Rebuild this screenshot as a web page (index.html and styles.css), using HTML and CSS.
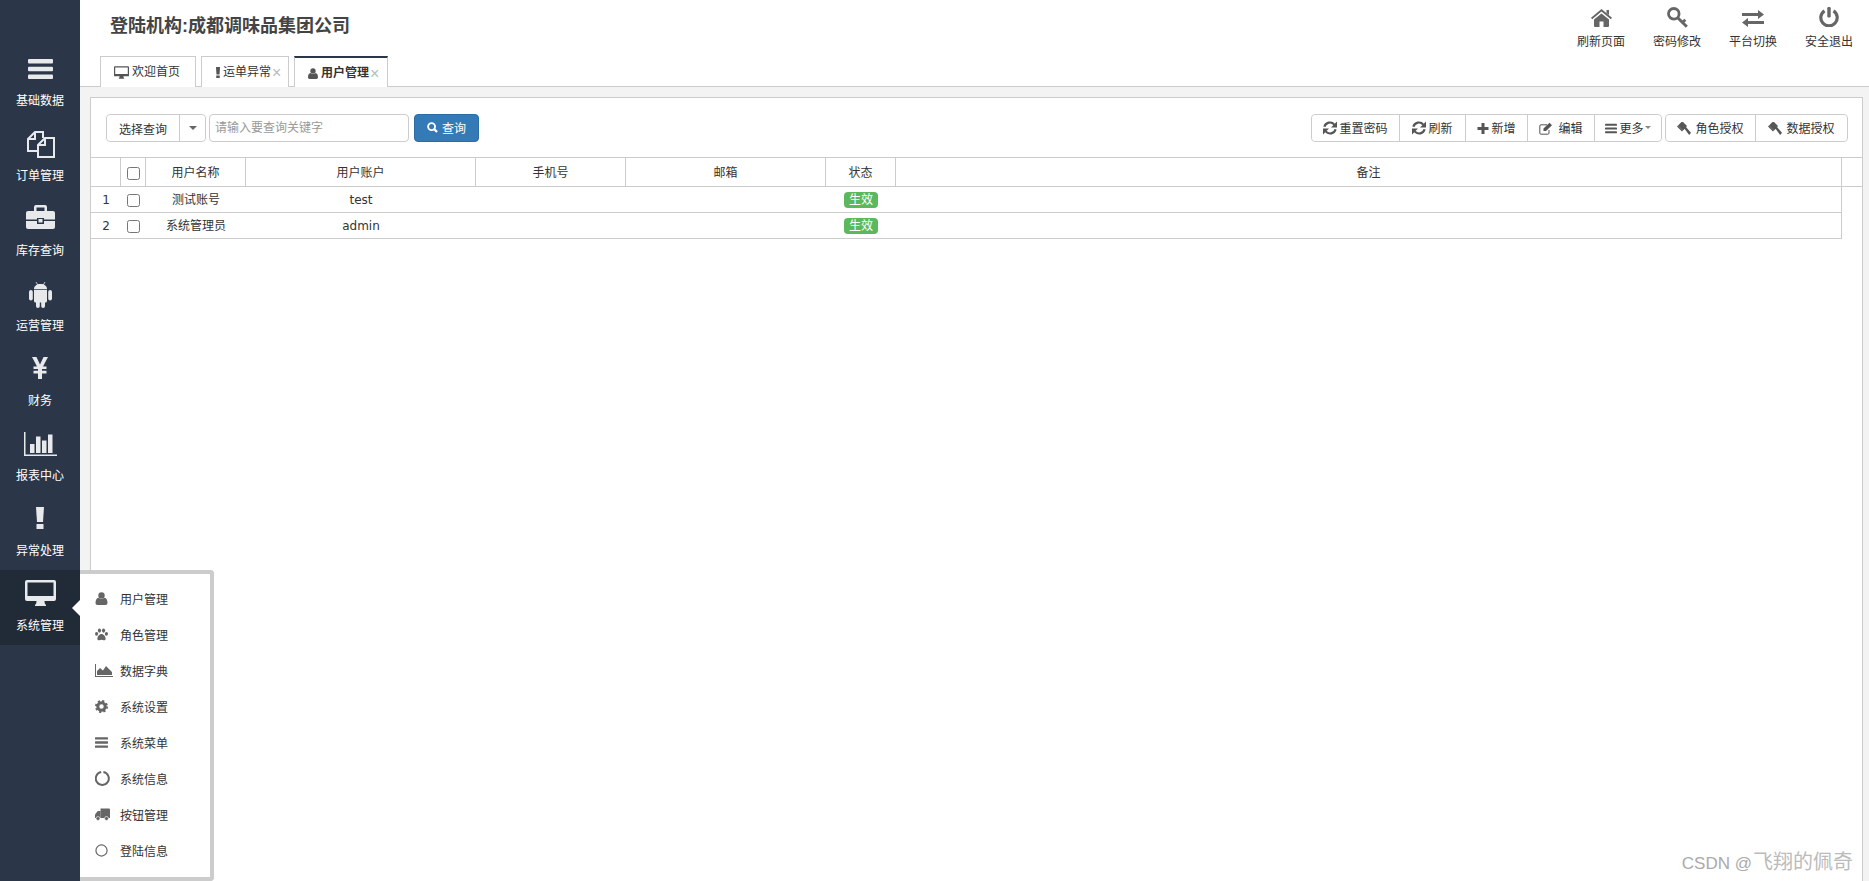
FILE: index.html
```html
<!DOCTYPE html>
<html lang="zh">
<head>
<meta charset="utf-8">
<title>用户管理</title>
<link rel="stylesheet" href="styles.css">
</head>
<body>
<svg class="sprite" xmlns="http://www.w3.org/2000/svg">
  <symbol id="bars" viewBox="0 0 25 20"><rect width="25" height="4.4" rx="1"/><rect y="7.8" width="25" height="4.4" rx="1"/><rect y="15.6" width="25" height="4.4" rx="1"/></symbol>
  <symbol id="files" viewBox="0 0 29 28"><path fill="none" stroke="currentColor" stroke-width="2" d="M11 21H2V9l7-7h8v6"/><path fill="none" stroke="currentColor" stroke-width="2" d="M9 2v7H2"/><path fill="none" stroke="currentColor" stroke-width="2" d="M12 27V15l7-7h9v19z"/><path fill="none" stroke="currentColor" stroke-width="2" d="M19 8v7h-7"/></symbol>
  <symbol id="briefcase" viewBox="0 0 29 24"><path fill-rule="evenodd" d="M10 0h9a2 2 0 0 1 2 2v4h6a2 2 0 0 1 2 2v6.5H18V13h-7v1.500H0V8a2 2 0 0 1 2-2h6V2a2 2 0 0 1 2-2zm.5 2.500V6h8V2.500z"/><path d="M0 16h11v3h7v-3h11v6a2 2 0 0 1-2 2H2a2 2 0 0 1-2-2z"/><rect x="12.500" y="14" width="4" height="3.500"/></symbol>
  <symbol id="android" viewBox="0 0 23 26"><path d="M5 7.200C5 4 7.500 2 11.500 2S18 4 18 7.200z"/><path d="M7 0l1.800 3M16 0l-1.800 3" stroke="currentColor" stroke-width=".8"/><path d="M5 8h13v11a1.500 1.500 0 0 1-1.500 1.500h-10A1.500 1.500 0 0 1 5 19z"/><rect y="8" width="3.800" height="10.500" rx="1.900"/><rect x="19.200" y="8" width="3.800" height="10.500" rx="1.900"/><rect x="7" y="18" width="3.800" height="8" rx="1.900"/><rect x="12.200" y="18" width="3.800" height="8" rx="1.900"/></symbol>
  <symbol id="yen" viewBox="0 0 16 22"><path d="M0 0h4.500L8 7.500 11.500 0H16l-5 9.500h3.500V12H10v1.800h4.500v2.600H10V22H6v-5.600H1.500v-2.600H6V12H1.500V9.500H5z"/></symbol>
  <symbol id="chart" viewBox="0 0 33 24"><rect width="1.500" height="24"/><rect y="22.500" width="33" height="1.500"/><rect x="6" y="12" width="4.500" height="9"/><rect x="12" y="4.500" width="4.500" height="16.500"/><rect x="18" y="8.500" width="4.500" height="12.500"/><rect x="24" y="2.500" width="4.500" height="18.500"/></symbol>
  <symbol id="excl" viewBox="0 0 8 22"><path d="M0 0h8l-1 15H1z"/><rect x=".5" y="17" width="7" height="5"/></symbol>
  <symbol id="desktop" viewBox="0 0 31 26"><path fill-rule="evenodd" d="M2 0h27a2 2 0 0 1 2 2v17a2 2 0 0 1-2 2H19.500c0 2 .5 3 1.500 4v1H10v-1c1-1 1.500-2 1.500-4H2a2 2 0 0 1-2-2V2a2 2 0 0 1 2-2zm.5 2.500V16h26V2.500z"/></symbol>
  <symbol id="home" viewBox="0 0 21 18"><path d="M10.500 0L21 8.800l-1.200 1.400-9.300-7.700-9.300 7.700L0 8.800z"/><path d="M15.500 1H18v5l-2.500-2z"/><path d="M10.500 4.500L18 10.600V17a1 1 0 0 1-1 1h-4.500v-5.500h-4V18H4a1 1 0 0 1-1-1v-6.400z"/></symbol>
  <symbol id="key" viewBox="0 0 21 21"><circle cx="6.800" cy="6.800" r="5.300" fill="none" stroke="currentColor" stroke-width="2.800"/><path d="M10.500 10.500L19.800 19.800" fill="none" stroke="currentColor" stroke-width="3"/><path d="M14.500 14.500l2.800-2.800 2 2-2.800 2.800z"/></symbol>
  <symbol id="exchange" viewBox="0 0 22 17"><path d="M0 3h16V0l6 4.500L16 9V6H0zM22 11H6V8L0 12.500 6 17v-3h16z"/></symbol>
  <symbol id="power" viewBox="0 0 20 20"><path d="M5.500 3.800a8.200 8.200 0 1 0 9 0" fill="none" stroke="currentColor" stroke-width="3.200"/><rect x="8.300" width="3.400" height="10.500" rx="1.200"/></symbol>
  <symbol id="user" viewBox="0 0 12 13"><circle cx="6" cy="3.400" r="3.200"/><path d="M0 11c0-3 1-4.800 3-5.200 1.800 1.400 4.200 1.400 6 0 2 .4 3 2.200 3 5.200 0 1.300-.8 2-2 2H2c-1.200 0-2-.7-2-2z"/></symbol>
  <symbol id="paw" viewBox="0 0 14 13"><ellipse cx="1.700" cy="5.800" rx="1.700" ry="2"/><ellipse cx="4.800" cy="2.300" rx="1.700" ry="2.300"/><ellipse cx="9.200" cy="2.300" rx="1.700" ry="2.300"/><ellipse cx="12.300" cy="5.800" rx="1.700" ry="2"/><path d="M7 6c2.300 0 4.500 3 4.500 5 0 2-2.500 1.800-4.500 1.200-2 .6-4.500.8-4.500-1.200 0-2 2.200-5 4.500-5z"/></symbol>
  <symbol id="area" viewBox="0 0 18 13"><rect width="1" height="13"/><rect y="12" width="18" height="1"/><path d="M2 11V7l3-3 3 2.500L11 2l6 6v3z"/></symbol>
  <symbol id="cog" viewBox="0 0 14 14"><circle cx="7" cy="7" r="4" fill="none" stroke="currentColor" stroke-width="3.200"/><circle cx="7" cy="7" r="6" fill="none" stroke="currentColor" stroke-width="2" stroke-dasharray="2.360 2.350"/></symbol>
  <symbol id="notch" viewBox="0 0 15 15"><path d="M8.400 1.100A6.500 6.500 0 1 1 6.200 1.100" fill="none" stroke="currentColor" stroke-width="2"/></symbol>
  <symbol id="truck" viewBox="0 0 15 12"><path d="M5.500 0H14a1 1 0 0 1 1 1v8.500H5.500z"/><path d="M5.500 2.500H2.800L0 6v3.500h5.500z"/><circle cx="3" cy="10" r="2" stroke="#fff" stroke-width=".6"/><circle cx="11.500" cy="10" r="2" stroke="#fff" stroke-width=".6"/></symbol>
  <symbol id="circle" viewBox="0 0 14 14"><circle cx="7" cy="7" r="6" fill="none" stroke="currentColor" stroke-width="1.300"/></symbol>
  <symbol id="refresh" viewBox="0 0 14 14"><path d="M11.300 3.600A5.700 5.700 0 0 0 1.400 5.800" fill="none" stroke="currentColor" stroke-width="2.200"/><path d="M14 0.500v6H8z"/><path d="M2.700 10.400A5.700 5.700 0 0 0 12.600 8.200" fill="none" stroke="currentColor" stroke-width="2.200"/><path d="M0 13.500v-6h6z"/></symbol>
  <symbol id="plus" viewBox="0 0 11 11"><path d="M4 0h3v4h4v3H7v4H4V7H0V4h4z"/></symbol>
  <symbol id="edit" viewBox="0 0 14 13"><path d="M10 8v3a1.200 1.200 0 0 1-1.200 1.200H2A1.200 1.200 0 0 1 .8 11V4A1.200 1.200 0 0 1 2 2.800h6" fill="none" stroke="currentColor" stroke-width="1"/><path d="M4.500 6.500L10.500.8 13 3.200 7 9H4.500z"/></symbol>
  <symbol id="gavel" viewBox="0 0 14 13"><path d="M4.500 0l5 5-3.500 3.500-5-5z"/><path d="M0 4.500l1-1 5 5-1 1zM4 0l5 5 1-1-5-5z"/><path d="M7 6l1.500-1.500L14 10.800 12.200 13z"/></symbol>
  <symbol id="search" viewBox="0 0 12 12"><circle cx="5" cy="5" r="3.800" fill="none" stroke="currentColor" stroke-width="2"/><path d="M7.800 7.800L11 11" fill="none" stroke="currentColor" stroke-width="2.400"/></symbol>
</svg>

<div class="app">
  <nav class="side">
    <a class="side-item"><svg class="ic ic-bars"><use href="#bars"/></svg><span>基础数据</span></a>
    <a class="side-item"><svg class="ic ic-files"><use href="#files"/></svg><span>订单管理</span></a>
    <a class="side-item"><svg class="ic ic-brief"><use href="#briefcase"/></svg><span>库存查询</span></a>
    <a class="side-item"><svg class="ic ic-android"><use href="#android"/></svg><span>运营管理</span></a>
    <a class="side-item"><svg class="ic ic-yen"><use href="#yen"/></svg><span>财务</span></a>
    <a class="side-item"><svg class="ic ic-chart"><use href="#chart"/></svg><span>报表中心</span></a>
    <a class="side-item"><svg class="ic ic-excl"><use href="#excl"/></svg><span>异常处理</span></a>
    <a class="side-item is-active"><svg class="ic ic-desktop"><use href="#desktop"/></svg><span>系统管理</span></a>
  </nav>

  <main class="main">
    <header class="head">
      <div class="head-top">
        <h1 class="org">登陆机构:成都调味品集团公司</h1>
        <div class="actions">
          <a class="action"><svg class="ic a-home"><use href="#home"/></svg><span>刷新页面</span></a>
          <a class="action"><svg class="ic a-key"><use href="#key"/></svg><span>密码修改</span></a>
          <a class="action"><svg class="ic a-ex"><use href="#exchange"/></svg><span>平台切换</span></a>
          <a class="action"><svg class="ic a-pow"><use href="#power"/></svg><span>安全退出</span></a>
        </div>
      </div>
      <div class="tabs">
        <a class="tab t-home"><svg class="ic t-desktop"><use href="#desktop"/></svg>欢迎首页</a>
        <a class="tab t-err"><svg class="ic t-excl"><use href="#excl"/></svg>运单异常<i class="close">×</i></a>
        <a class="tab t-user is-current"><svg class="ic t-person"><use href="#user"/></svg>用户管理<i class="close">×</i></a>
      </div>
    </header>

    <section class="content">
      <div class="panel">
        <div class="toolbar">
          <div class="query">
            <div class="split">
              <button class="sbtn s-label">选择查询</button>
              <button class="sbtn s-caret"><i class="caret"></i></button>
            </div>
            <input class="kw" type="text" placeholder="请输入要查询关键字">
            <button class="go"><svg class="ic b-search"><use href="#search"/></svg>查询</button>
          </div>
          <div class="tools">
            <div class="group">
              <button class="tbtn w88"><svg class="ic b-ic"><use href="#refresh"/></svg>重置密码</button>
              <button class="tbtn w66"><svg class="ic b-ic"><use href="#refresh"/></svg>刷新</button>
              <button class="tbtn w62"><svg class="ic b-plus"><use href="#plus"/></svg>新增</button>
              <button class="tbtn w67"><svg class="ic b-edit"><use href="#edit"/></svg>编辑</button>
              <button class="tbtn w68"><svg class="ic b-plus"><use href="#bars"/></svg>更多<i class="caret caret-sm"></i></button>
            </div>
            <div class="group">
              <button class="tbtn w91"><svg class="ic b-gavel"><use href="#gavel"/></svg>角色授权</button>
              <button class="tbtn w92"><svg class="ic b-gavel"><use href="#gavel"/></svg>数据授权</button>
            </div>
          </div>
        </div>

        <div class="grid-head">
          <div class="row row-head">
            <div class="cell"></div>
            <div class="cell"><input class="chk" type="checkbox"></div>
            <div class="cell">用户名称</div>
            <div class="cell">用户账户</div>
            <div class="cell">手机号</div>
            <div class="cell">邮箱</div>
            <div class="cell">状态</div>
            <div class="cell">备注</div>
          </div>
        </div>
        <div class="row row-body">
          <div class="cell">1</div>
          <div class="cell"><input class="chk" type="checkbox"></div>
          <div class="cell">测试账号</div>
          <div class="cell">test</div>
          <div class="cell"></div>
          <div class="cell"></div>
          <div class="cell"><span class="badge">生效</span></div>
          <div class="cell"></div>
        </div>
        <div class="row row-body">
          <div class="cell">2</div>
          <div class="cell"><input class="chk" type="checkbox"></div>
          <div class="cell">系统管理员</div>
          <div class="cell">admin</div>
          <div class="cell"></div>
          <div class="cell"></div>
          <div class="cell"><span class="badge">生效</span></div>
          <div class="cell"></div>
        </div>
      </div>
    </section>
  </main>

  <div class="popup">
    <a class="pop-item"><svg class="ic p-ic"><use href="#user"/></svg>用户管理</a>
    <a class="pop-item"><svg class="ic p-ic"><use href="#paw"/></svg>角色管理</a>
    <a class="pop-item"><svg class="ic p-area"><use href="#area"/></svg>数据字典</a>
    <a class="pop-item"><svg class="ic p-ic"><use href="#cog"/></svg>系统设置</a>
    <a class="pop-item"><svg class="ic p-ic"><use href="#bars"/></svg>系统菜单</a>
    <a class="pop-item"><svg class="ic p-truck"><use href="#notch"/></svg>系统信息</a>
    <a class="pop-item"><svg class="ic p-truck"><use href="#truck"/></svg>按钮管理</a>
    <a class="pop-item"><svg class="ic p-ic"><use href="#circle"/></svg>登陆信息</a>
  </div>

  <div class="mark">CSDN @<span class="mark-cjk">飞翔的佩奇</span></div>
</div>
</body>
</html>
```

FILE: styles.css
```css
* { box-sizing: border-box; }
html, body { height: 100%; }
body {
  margin: 0;
  overflow: hidden;
  font-family: "DejaVu Sans", "Noto Sans CJK SC", sans-serif;
  font-size: 12px;
  color: #333;
  background: #fff;
}
.sprite { display: none; }
.ic { display: block; fill: currentColor; flex: none; }

.app { position: relative; display: flex; height: 881px; }

/* sidebar */
.side {
  width: 80px;
  flex: none;
  padding-top: 45px;
  background: #2b3648;
  color: #e8e9eb;
}
.side-item {
  height: 75px;
  display: flex;
  flex-direction: column;
  align-items: center;
  position: relative;
  padding-top: 46px;
}
.side-item .ic { position: absolute; }
.side-item span { line-height: 20px; color: #fff; }
.side-item.is-active { background: #212b38; }
.ic-bars { width: 25px; height: 20px; top: 14px; }
.ic-files { width: 29px; height: 28px; top: 10px; }
.ic-brief { width: 29px; height: 24px; top: 10px; }
.ic-android { width: 23px; height: 26px; top: 12px; }
.ic-yen { width: 16px; height: 22px; top: 12px; }
.ic-chart { width: 33px; height: 24px; top: 12px; }
.ic-excl { width: 8px; height: 22px; top: 12px; }
.ic-desktop { width: 31px; height: 26px; top: 10px; }

/* main */
.main { flex: 1; min-width: 0; display: flex; flex-direction: column; }
.head { background: #fff; border-bottom: 1px solid #ccc; height: 87px; }
.head-top { height: 56px; display: flex; justify-content: space-between; padding-left: 30px; padding-right: 2px; }
.org {
  margin: 0;
  padding-top: 14px;
  font-family: "Liberation Sans", "Noto Sans CJK SC", sans-serif;
  font-size: 18px;
  line-height: 24px;
  font-weight: bold;
  color: #444;
}
.actions { display: flex; }
.action {
  width: 76px;
  display: flex;
  flex-direction: column;
  align-items: center;
  color: #333;
  height: 50px;
  padding-top: 7px;
  position: relative;
}
.action .ic { color: #666; }
.action span { position: absolute; top: 32px; line-height: 20px; }
.a-home { width: 21px; height: 18px; margin-top: 2px; }
.a-key { width: 21px; height: 21px; }
.a-ex { width: 22px; height: 17px; margin-top: 3px; }
.a-pow { width: 20px; height: 20px; }

.tabs { display: flex; gap: 5px; padding-left: 20px; height: 31px; }
.tab {
  height: 31px;
  border: 1px solid #ccc;
  border-bottom: 0;
  padding-top: 1px;
  background: #fff;
  display: flex;
  align-items: center;
  line-height: 29px;
  color: #333;
}
.t-home { width: 96px; padding-left: 13px; }
.t-err { width: 88px; padding-left: 14px; }
.t-user { width: 94px; padding-left: 13px; }
.t-desktop { width: 15px; height: 13px; margin-right: 3px; color: #555; }
.t-excl { width: 4px; height: 11px; margin-right: 3px; color: #555; }
.t-person { width: 10px; height: 11px; margin-right: 3px; color: #555; }
.close { font-style: normal; color: #bbb; font-size: 16px; margin-left: 1px; font-family: "Liberation Sans", sans-serif; }
.is-current { border-top: 2px solid #2b3648; font-weight: bold; height: 31px; position: relative; }
.is-current .close { font-weight: normal; }

.content { flex: 1; background: #f3f3f3; padding: 10px 6px 0 10px; min-height: 0; }
.panel { height: 100%; background: #fff; border: 1px solid #ccc; border-bottom: 0; }

.toolbar { height: 59px; padding: 16px 14px 0 15px; display: flex; justify-content: space-between; }
.query { display: flex; }
.split { display: flex; height: 28px; border: 1px solid #ccc; border-radius: 4px; margin-right: 3px; }
.sbtn { background: #fff; border: 0; padding: 0; font: inherit; color: #333; }
.s-label { width: 73px; border-right: 1px solid #ccc; border-radius: 4px 0 0 4px; }
.s-caret { width: 25px; border-radius: 0 4px 4px 0; display: flex; align-items: center; justify-content: center; }
.caret { display: block; width: 0; height: 0; border-style: solid; border-width: 4px 4px 0; border-color: #666 transparent transparent; }
.caret-sm { border-width: 3px 3.5px 0; border-top-color: #888; margin-left: -1px; }
.kw {
  width: 200px;
  height: 28px;
  border: 1px solid #ccc;
  border-radius: 4px;
  padding: 0 5px;
  font: inherit;
  color: #333;
  outline: 0;
}
.kw::placeholder { color: #999; opacity: 1; }
.go {
  width: 65px;
  height: 28px;
  margin-left: 5px;
  padding: 0 0 1px;
  border: 1px solid #2e6da4;
  border-radius: 4px;
  background: #337ab7;
  color: #fff;
  font: inherit;
  display: flex;
  align-items: center;
  justify-content: center;
  gap: 4px;
}
.b-search { width: 11px; height: 11px; }

.tools { display: flex; gap: 3px; }
.group { display: flex; height: 28px; border: 1px solid #ccc; border-radius: 4px; }
.tbtn {
  height: 26px;
  padding: 0 0 2px;
  border: 0;
  border-right: 1px solid #ccc;
  background: #fff;
  font: inherit;
  color: #333;
  display: flex;
  align-items: center;
  justify-content: center;
  gap: 2px;
}
.tbtn:first-child { border-radius: 4px 0 0 4px; }
.tbtn:last-child { border-right: 0; border-radius: 0 4px 4px 0; }
.tbtn .ic { color: #555; margin-top: 2px; }
.w88 { width: 88px; }
.w66 { width: 66px; }
.w62 { width: 62px; }
.w67 { width: 67px; }
.w68 { width: 66px; }
.w91 { width: 90px; }
.w92 { width: 91px; }
.b-ic { width: 14px; height: 14px; }
.b-plus { width: 12px; height: 11px; }
.b-edit { width: 14px; height: 13px; margin-right: 3px; }
.b-gavel { width: 14px; height: 13px; margin-right: 2px; }

.grid-head { border-top: 1px solid #ccc; border-bottom: 1px solid #ccc; }
.row {
  display: grid;
  grid-template-columns: 30px 25px 100px 230px 150px 200px 70px 946px;
  width: 1751px;
  text-align: center;
}
.row-head { height: 28px; line-height: 28px; }
.row-head .cell { border-right: 1px solid #ccc; }
.row-body { height: 26px; line-height: 25px; border-bottom: 1px solid #ccc; border-right: 1px solid #ccc; }
.cell { display: flex; align-items: center; justify-content: center; min-width: 0; padding-top: 1px; }
.chk { margin: 0; width: 13px; height: 13px; }
.badge {
  display: block;
  width: 34px;
  height: 16px;
  margin-top: -1px;
  line-height: 16px;
  border-radius: 4px;
  background: #5cb85c;
  color: #fff;
}

/* popup menu over the content */
.popup {
  position: absolute;
  left: 80px;
  top: 570px;
  bottom: 0;
  width: 134px;
  padding: 6px 0 0 15px;
  background: #fff;
  border: solid #ccc;
  border-width: 4px 4px 4px 0;
  border-radius: 0 4px 4px 0;
}
.popup::before {
  content: "";
  position: absolute;
  left: -8px;
  top: 26px;
  border-style: solid;
  border-width: 8px 8px 8px 0;
  border-color: transparent #fff transparent transparent;
}
.pop-item { height: 36px; display: flex; align-items: center; color: #333; }
.p-ic { width: 13px; height: 13px; margin-right: 12px; color: #666; }
.p-area { width: 18px; height: 13px; margin-right: 7px; color: #666; }
.p-truck { width: 15px; height: 15px; margin-right: 10px; color: #666; }

.mark {
  position: absolute;
  right: 16px;
  top: 850px;
  font-family: "Liberation Sans", "Noto Sans CJK SC", sans-serif;
  font-size: 17px;
  line-height: 24px;
  color: #aaa;
}
.mark-cjk { font-size: 20px; color: #bbb; margin-left: 1px; }
```
